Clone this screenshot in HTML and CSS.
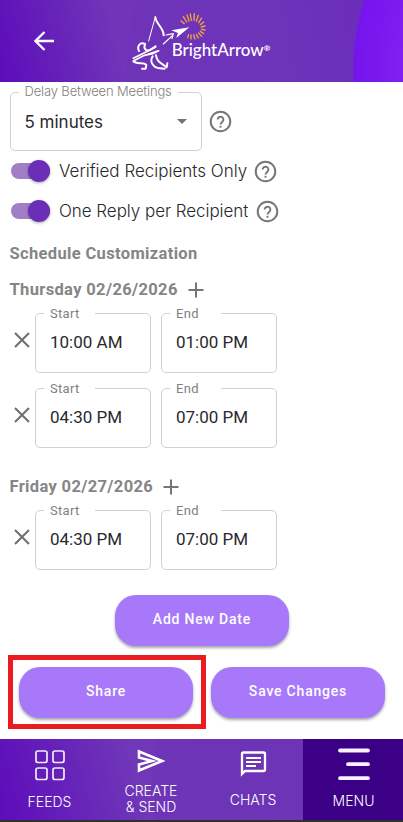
FILE: index.html
```html
<!DOCTYPE html>
<html lang="en">
<head>
<meta charset="utf-8">
<title>BrightArrow</title>
<link rel="stylesheet" href="styles.css">
</head>
<body>
<svg class="defs" aria-hidden="true">
  <symbol id="help" viewBox="0 0 24 24"><circle cx="12" cy="12" r="10.2" fill="none" stroke="currentColor" stroke-width="2.1"/><path d="M9 10a3 3 0 1 1 4.9 2.3c-1.2 1-1.9 1.5-1.9 2.9" fill="none" stroke="currentColor" stroke-width="2"/><path d="M11 16.5h2v2h-2z" fill="currentColor"/></symbol>
  <symbol id="plus" viewBox="0 0 16 16"><path d="M8 .5v15M.5 8h15" stroke="currentColor" stroke-width="2"/></symbol>
  <symbol id="cross" viewBox="0 0 16 16"><path d="M1 1l14 14M15 1L1 15" stroke="currentColor" stroke-width="2.1"/></symbol>
</svg>
<header class="header">
  <svg class="back" viewBox="0 0 20 20"><path d="M20 10H2M10.5 1L1.5 10l9 9" fill="none" stroke="#fff" stroke-width="2.3"/></svg>
  <svg class="logo" viewBox="0 0 480 225">
    <g stroke="#f3a73b" stroke-width="4" stroke-linecap="round">
      <path d="M193 56l-10-8M200 51l-10-16M207 48l-6-18M214 46l-3-19M222 46l1-20M229 49l6-18M236 53l9-14M241 59l10-8M244 66l11-3M244 73l11 2M241 79l10 7M236 84l9 10M229 88l6 11M221 90l4 12M213 90v12M206 89l-3 9"/>
    </g>
    <g fill="none" stroke="#fff" stroke-linecap="round" stroke-linejoin="round">
      <path d="M106 36L86 108" stroke-width="3"/>
      <path d="M106 37C109 58 132 70 131 91" stroke-width="6"/>
      <path d="M130 117L158 91M138 90L160 86L156 101" stroke-width="3.5"/>
      <path d="M57 138C50 124 60 109 75 117M75 118C70 130 77 139 88 136L107 124" stroke-width="6"/>
      <path d="M40 160L66 147L106 127M40 168L69 153L112 138M73 151L101 145L116 137" stroke-width="5"/>
      <path d="M41 170C54 180 71 169 79 180L77 191H66" stroke-width="6"/>
      <path d="M98 154C91 163 93 176 102 183C112 192 124 190 134 191M108 151C112 174 125 174 140 187L142 175" stroke-width="6"/>
    </g>
    <path d="M154 76L208 67L169 99L174 84Z" fill="#fff"/>
    <text class="brand" x="155" y="153" textLength="296" lengthAdjust="spacingAndGlyphs">BrightArrow<tspan class="registered" dy="-14">®</tspan></text>
  </svg>
</header>
<main>
  <div class="delay">
    <div class="field select"><span class="label">Delay Between Meetings</span><span class="value">5 minutes</span><i class="caret"></i></div>
    <svg class="help"><use href="#help"/></svg>
  </div>
  <div class="option"><i class="switch"></i><span class="verified">Verified Recipients Only</span><svg class="help"><use href="#help"/></svg></div>
  <div class="option"><i class="switch"></i><span class="reply">One Reply per Recipient</span><svg class="help"><use href="#help"/></svg></div>
  <h2>Schedule Customization</h2>
  <section>
    <h3>Thursday 02/26/2026 <svg class="plus"><use href="#plus"/></svg></h3>
    <div class="slot"><svg class="cross"><use href="#cross"/></svg><div class="field time"><span class="label">Start</span><span class="value">10:00 AM</span></div><div class="field time"><span class="label">End</span><span class="value">01:00 PM</span></div></div>
    <div class="slot"><svg class="cross"><use href="#cross"/></svg><div class="field time"><span class="label">Start</span><span class="value">04:30 PM</span></div><div class="field time"><span class="label">End</span><span class="value">07:00 PM</span></div></div>
  </section>
  <section>
    <h3>Friday 02/27/2026 <svg class="plus"><use href="#plus"/></svg></h3>
    <div class="slot"><svg class="cross"><use href="#cross"/></svg><div class="field time"><span class="label">Start</span><span class="value">04:30 PM</span></div><div class="field time"><span class="label">End</span><span class="value">07:00 PM</span></div></div>
  </section>
  <button class="button add">Add New Date</button>
  <div class="actions"><div class="highlight"><button class="button">Share</button></div><button class="button">Save Changes</button></div>
</main>
<nav>
  <a class="feeds"><svg width="30" height="31" viewBox="0 0 30 31"><g fill="none" stroke="#f2eafa" stroke-width="1.7"><rect x="1" y="1" width="11" height="11.5" rx="2"/><rect x="18" y="1" width="11" height="11.5" rx="2"/><rect x="1" y="18" width="11" height="11.5" rx="2"/><rect x="18" y="18" width="11" height="11.5" rx="2"/></g></svg><span>FEEDS</span></a>
  <a class="create"><svg width="28" height="24" viewBox="0 0 28 24"><path d="M2 2.5L25 12L2 21.5V15.5L15 12L2 8.5Z" fill="none" stroke="#fff" stroke-width="2.6"/></svg><span>CREATE<br>&amp; SEND</span></a>
  <a class="chats"><svg width="27" height="26" viewBox="0 0 27 26"><path d="M2 23V3Q2 1.5 3.5 1.5H23.5Q25 1.5 25 3V18.5Q25 20 23.5 20H5Z" fill="none" stroke="#fff" stroke-width="2.3"/><path d="M6 7h15M6 11h15M6 15h10" stroke="#fff" stroke-width="2"/></svg><span>CHATS</span></a>
  <a class="menu"><svg width="32" height="33" viewBox="0 0 32 33"><path d="M2 2.5h28M10 16.2h20M2 30.2h28" stroke="#f8f3ff" stroke-width="3.8" stroke-linecap="round"/></svg><span>MENU</span></a>
</nav>
</body>
</html>
```
FILE: styles.css
```css
* { box-sizing: border-box; }
body { margin: 0; width: 403px; height: 822px; display: flex; flex-direction: column; overflow: hidden; background: #fff; color: #29292c; font-family: Roboto, sans-serif; }
.defs { display: none; }
svg { display: block; flex: none; }
.header { height: 82px; flex: none; display: flex; padding: 5px 0 0 34px; background: radial-gradient(ellipse 103px 156px at 456px 69px, #8b2cf4 0, #7514ed 99%, transparent 100%), radial-gradient(ellipse 350px 310px at 475px 75px, rgba(98,38,180,.3) 0, rgba(102,43,180,.2) 99%, transparent 100%), linear-gradient(75deg, #5c0cba 0, #7035b8 30%, #7138bb 65%, #6b2dba 100%); }
.back { width: 20px; height: 20px; margin-top: 26px; }
.logo { width: 160px; height: 75px; margin-left: 66px; }
.brand { font: 500 53px Lato, sans-serif; fill: #fff; }
.registered { font-size: 25px; font-weight: 700; }
main { height: 657px; flex: none; padding: 10px 0 0 9.5px; }
.delay { display: flex; align-items: center; gap: 7px; }
.field { position: relative; display: flex; align-items: center; flex: none; height: 60px; border: 1px solid #d1d1d1; border-radius: 5px; padding: 0 0 2px 14px; }
.select { width: 192px; height: 59px; padding-bottom: 0; }
.label { position: absolute; top: -9px; left: 8px; height: 17px; line-height: 17px; padding: 0 6px; background: #fff; color: #808080; white-space: nowrap; font-size: 13px; }
.select .label { top: -10px; width: 159px; font-family: Inter, sans-serif; font-weight: 300; font-size: 13px; letter-spacing: -.15px; }
.time .label { width: 51px; letter-spacing: .3px; }
.value { font-size: 17px; white-space: nowrap; }
.select .value { font: 400 17px Inter, sans-serif; }
.caret { margin-left: auto; margin-right: 14px; border: 5px solid transparent; border-top-color: #737373; border-bottom: 0; }
.help { width: 23px; height: 23px; color: #777; }
.option { display: flex; align-items: center; height: 40px; }
.switch { position: relative; width: 39px; height: 16px; border-radius: 8px; background: #a17fc7; margin-right: 9px; margin-left: 1.5px; }
.switch::after { content: ""; position: absolute; right: 0; top: -3px; width: 22px; height: 22px; border-radius: 50%; background: #6a2eb7; box-shadow: 0 1px 3px rgba(0,0,0,.35); }
.option span { font: 350 17px Inter, sans-serif; white-space: nowrap; margin-right: 8px; }
.option .verified { width: 187px; }
.option .reply { width: 189px; letter-spacing: -.05px; }
h2, h3 { margin: 0; color: #858585; font-size: 16.5px; font-weight: 700; letter-spacing: .35px; }
h2 { height: 42px; line-height: 45px; }
h3 { height: 40px; display: flex; align-items: center; gap: 10px; padding-bottom: 7px; }
.plus { width: 16px; height: 16px; color: #757575; }
.slot { display: flex; align-items: center; gap: 10px; margin-bottom: 15px; }
.cross { width: 16px; height: 16px; margin: -6px -5px 0 4.5px; color: #707070; }
.time { width: 116px; }
section:not(:first-of-type) { padding-top: 7px; }
.button { width: 174px; height: 51px; flex: none; padding: 0 0 3px; border: 0; border-radius: 21px; background: #a779fa; color: #fff; font: 500 14px Roboto, sans-serif; letter-spacing: .8px; box-shadow: 0 2px 3px rgba(0,0,0,.35); }
.add { display: block; margin: 25px 0 0 105.5px; }
.actions { display: flex; align-items: center; margin: 9px 0 0 -1.5px; gap: 5px; }
.highlight { width: 198px; height: 74px; border: 5px solid #eb1c20; padding: 7px 6px 0; }
nav { height: 83px; flex: none; display: flex; background: radial-gradient(ellipse 410px 270px at 560px 45px, rgba(104,43,184,.32) 0, rgba(104,43,184,.22) 99%, transparent 100%), linear-gradient(75deg, #5c0cba 0, #7037b8 35%, #7037b8 100%); border-bottom: 2px solid #303030; }
nav a { display: flex; flex-direction: column; align-items: center; color: #fff; font: 300 14px/16px Inter, sans-serif; text-align: center; }
.feeds { width: 99px; padding-top: 11px; }
.feeds span { margin-top: 13px; }
.create { width: 104px; padding-top: 10px; }
.create span { margin-top: 10px; }
.chats { width: 100px; padding-top: 12px; }
.chats span { margin-top: 15px; }
.menu { width: 100px; padding: 9px 0 0 1px; background: #3b0085; }
.menu span { margin-top: 12px; }
```
